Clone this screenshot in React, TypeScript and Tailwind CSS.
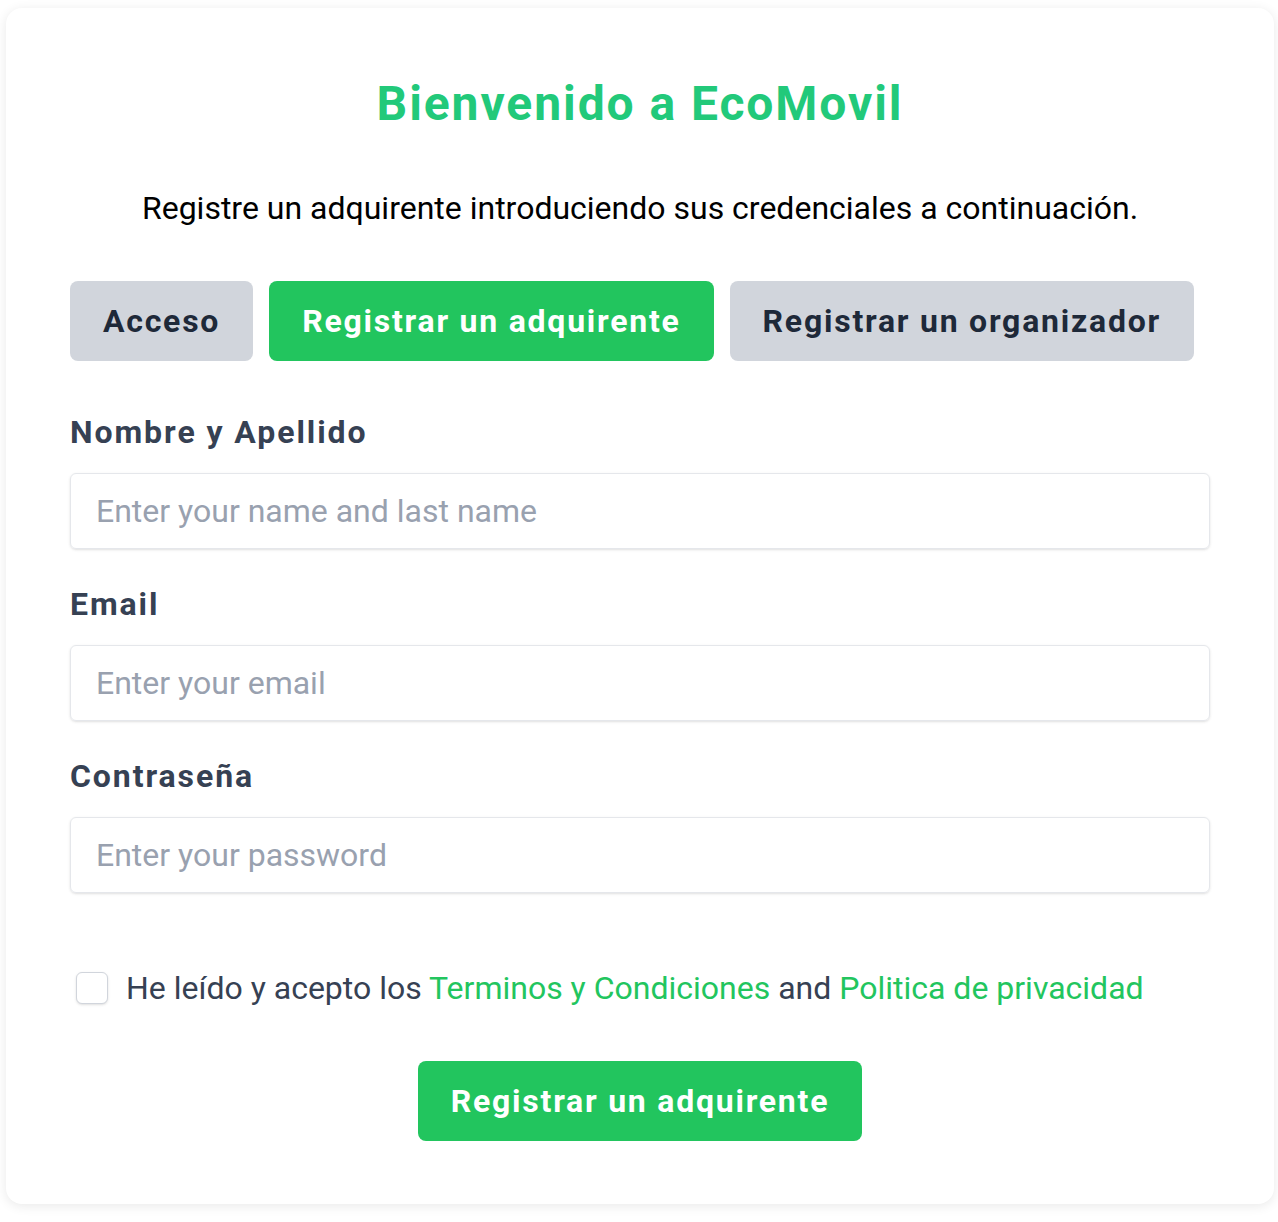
const fields = [
  { label: 'Nombre y Apellido', placeholder: 'Enter your name and last name', type: 'text' },
  { label: 'Email', placeholder: 'Enter your email', type: 'email' },
  { label: 'Contraseña', placeholder: 'Enter your password', type: 'password' },
];

const App = () => {
  return (
    <div className="min-h-[1222px] bg-white pl-[6px] pr-[4px] pt-[8px] pb-[18px] font-['Roboto',sans-serif]">
      <div className="rounded-2xl bg-white px-16 pt-[72px] pb-[63px] shadow-[0_2px_12px_rgba(0,0,0,0.09)]">
        <h1 className="text-center text-[48px] font-bold leading-[48px] tracking-[0.04em] text-[#22c97a]">
          Bienvenido a EcoMovil
        </h1>
        <p className="mt-[60px] text-center text-[32px] leading-[40px] text-black">
          Registre un adquirente introduciendo sus credenciales a continuación.
        </p>

        <div className="mt-[53px] flex gap-4">
          <button className="h-20 rounded-lg bg-gray-300 px-[33px] text-[32px] font-bold tracking-[0.055em] text-gray-800">
            Acceso
          </button>
          <button className="h-20 rounded-lg bg-[#22c55e] px-[33px] text-[32px] font-bold tracking-[0.055em] text-white">
            Registrar un adquirente
          </button>
          <button className="h-20 rounded-lg bg-gray-300 px-[33px] text-[32px] font-bold tracking-[0.055em] text-gray-800">
            Registrar un organizador
          </button>
        </div>

        <div className="mt-[51px] flex flex-col gap-[35px]">
          {fields.map((f) => (
            <div key={f.label}>
              <label className="block text-[32px] font-bold leading-[40px] tracking-[0.06em] text-gray-700">
                {f.label}
              </label>
              <input
                type={f.type}
                placeholder={f.placeholder}
                className="mt-[21px] h-[76px] w-full rounded-md border border-gray-200 px-[25px] text-[32px] shadow-sm outline-none placeholder:text-gray-400"
              />
            </div>
          ))}
        </div>

        <div className="mt-[75px] flex items-center gap-[18px] pl-[6px]">
          <input type="checkbox" className="h-8 w-8 appearance-none rounded-md border border-gray-300 bg-white shadow-sm" />
          <span className="text-[32px] leading-[40px] text-gray-700">
            He leído y acepto los <a className="text-[#22c55e]">Terminos y Condiciones</a> and{' '}
            <a className="text-[#22c55e]">Politica de privacidad</a>
          </span>
        </div>

        <div className="mt-[53px] flex justify-center">
          <button className="h-20 rounded-lg bg-[#22c55e] px-[33px] text-[32px] font-bold tracking-[0.055em] text-white">
            Registrar un adquirente
          </button>
        </div>
      </div>
    </div>
  );
};

export default App;
